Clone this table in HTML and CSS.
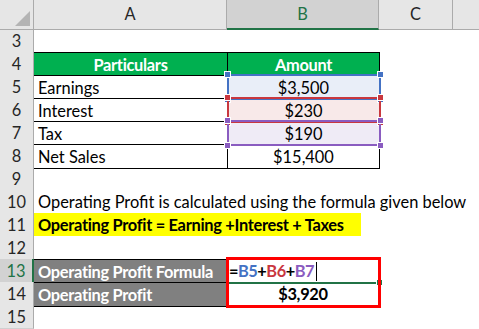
FILE: index.html
```html
<!DOCTYPE html>
<html>
<head>
<meta charset="utf-8">
<link rel="stylesheet" href="styles.css">
</head>
<body>
<div class="sheet">
  <div class="row hdr">
    <div class="corner"><span class="tri"></span></div>
    <div class="ch">A</div>
    <div class="ch sel-col">B</div>
    <div class="ch">C</div>
    <div class="ch last"></div>
  </div>
  <div class="row">
    <div class="rh">3</div><div class="c a"></div><div class="c b"></div><div class="c cc"></div><div class="c d"></div>
  </div>
  <div class="row">
    <div class="rh">4</div>
    <div class="c a tb th">Particulars</div>
    <div class="c b tb th bl">Amount</div>
    <div class="c cc bl"></div><div class="c d"></div>
  </div>
  <div class="row">
    <div class="rh">5</div>
    <div class="c a tb">Earnings</div>
    <div class="c b tb bl num fill-blue">$3,500<div class="sel blue"><i class="h tl"></i><i class="h tr"></i><i class="h bl2"></i><i class="h br"></i></div></div>
    <div class="c cc bl"></div><div class="c d"></div>
  </div>
  <div class="row">
    <div class="rh">6</div>
    <div class="c a tb">Interest</div>
    <div class="c b tb bl num fill-red">$230<div class="sel red"><i class="h tl"></i><i class="h tr"></i><i class="h bl2"></i><i class="h br"></i></div></div>
    <div class="c cc bl"></div><div class="c d"></div>
  </div>
  <div class="row">
    <div class="rh">7</div>
    <div class="c a tb">Tax</div>
    <div class="c b tb bl num fill-purple">$190<div class="sel purple"><i class="h tl"></i><i class="h tr"></i><i class="h bl2"></i><i class="h br"></i></div></div>
    <div class="c cc bl"></div><div class="c d"></div>
  </div>
  <div class="row">
    <div class="rh">8</div>
    <div class="c a tb bb">Net Sales</div>
    <div class="c b tb bb bl num">$15,400</div>
    <div class="c cc bl"></div><div class="c d"></div>
  </div>
  <div class="row">
    <div class="rh">9</div><div class="c a"></div><div class="c b"></div><div class="c cc"></div><div class="c d"></div>
  </div>
  <div class="row">
    <div class="rh">10</div>
    <div class="c a over">Operating Profit is calculated using the formula given below</div>
    <div class="c b"></div><div class="c cc"></div><div class="c d"></div>
  </div>
  <div class="row">
    <div class="rh">11</div>
    <div class="c a over"><span class="hl">Operating Profit = Earning +Interest + Taxes</span></div>
    <div class="c b"></div><div class="c cc"></div><div class="c d"></div>
  </div>
  <div class="row">
    <div class="rh">12</div><div class="c a"></div><div class="c b"></div><div class="c cc"></div><div class="c d"></div>
  </div>
  <div class="row">
    <div class="rh active">13</div>
    <div class="c a grey tb">Operating Profit Formula</div>
    <div class="c b formula"><span class="fx">=</span><span class="r1">B5</span><span class="fx">+</span><span class="r2">B6</span><span class="fx">+</span><span class="r3">B7</span><span class="caret"></span>
      <div class="editline"></div><div class="fillh"></div><div class="redbox"></div>
    </div>
    <div class="c cc"></div><div class="c d"></div>
  </div>
  <div class="row">
    <div class="rh">14</div>
    <div class="c a grey tb bb">Operating Profit</div>
    <div class="c b num bold">$3,920</div>
    <div class="c cc"></div><div class="c d"></div>
  </div>
  <div class="row">
    <div class="rh">15</div><div class="c a"></div><div class="c b"></div><div class="c cc"></div><div class="c d"></div>
  </div>
</div>
</body>
</html>
```
FILE: styles.css
```css
* { box-sizing: border-box; }
html, body { margin: 0; padding: 0; background: #fff; }
body {
  font-family: Lato, "Liberation Sans", sans-serif;
  font-size: 16.4px;
  color: #000;
  width: 479px;
  height: 329px;
  overflow: hidden;
}
.sheet { display: flex; flex-direction: column; }
.row {
  display: grid;
  grid-template-columns: 34px 193px 152px 74px 26px;
  height: 23px;
  line-height: 23px;
}
.row.hdr { height: 29px; line-height: 28px; }
.corner {
  background: #e6e6e6;
  border-right: 1px solid #ababab;
  border-bottom: 1px solid #ababab;
  position: relative;
}
.tri {
  position: absolute;
  left: 15px; top: 11px;
  width: 0; height: 0;
  border-left: 15px solid transparent;
  border-bottom: 15px solid #b4b4b4;
}
.ch {
  background: #e6e6e6;
  border-right: 1px solid #ababab;
  border-bottom: 1px solid #ababab;
  text-align: center;
  color: #262626;
  font-size: 16.4px;
}
.ch.sel-col {
  background: #d2d2d2;
  color: #217346;
  border-bottom: 2px solid #217346;
}
.ch.last { border-right: none; }
.rh {
  background: #e6e6e6;
  border-right: 1px solid #ababab;
  border-bottom: 1px solid #d0d0d0;
  text-align: center;
  color: #262626;
  font-size: 16.4px;
}
.rh.active {
  background: #d2d2d2;
  color: #217346;
  border-right: 2px solid #217346;
}
.c { position: relative; white-space: nowrap; padding-left: 4px; }
.over { overflow: visible; z-index: 2; }
.tb { border-top: 1px solid #000; }
.bb { border-bottom: 1px solid #000; }
.bl { border-left: 1px solid #000; }
.th {
  background: #00b050;
  color: #fff;
  font-weight: 700;
  letter-spacing: -0.3px;
  text-align: center;
  padding-left: 0;
}
.num { text-align: center; padding-left: 0; }
.bold { font-weight: 700; letter-spacing: -0.3px; }
.fill-blue { background: #e9eef8; }
.fill-red { background: #f8e9e9; }
.fill-purple { background: #efebf6; }
.sel {
  position: absolute;
  left: -1px; top: -2px; right: -2px; bottom: -1px;
  border: 2px solid;
  z-index: 3;
}
.sel.blue { border-color: #4472c4; }
.sel.red { border-color: #c9373f; z-index: 4; }
.sel.purple { border-color: #8a5cc0; z-index: 5; }
.h {
  position: absolute;
  width: 7px; height: 7px;
  border: 1px solid #fff;
}
.blue .h { background: #4472c4; }
.red .h { background: #c9373f; }
.purple .h { background: #8a5cc0; }
.h.tl { left: -5px; top: -5px; }
.h.tr { right: -5px; top: -5px; }
.h.bl2 { left: -5px; bottom: -5px; }
.h.br { right: -5px; bottom: -5px; }
.hl {
  display: inline-block;
  background: #ffff00;
  font-weight: 700;
  letter-spacing: -0.3px;
  width: 327px;
  margin-left: -4px;
  padding-left: 4px;
}
.grey {
  background: #808080;
  color: #fff;
  font-weight: 700;
  letter-spacing: -0.3px;
}
.formula { font-weight: 700; letter-spacing: -0.5px; padding-left: 2px; }
.fx { color: #000; }
.r1 { color: #4472c4; }
.r2 { color: #c9373f; }
.r3 { color: #8a5cc0; }
.caret {
  display: inline-block;
  width: 1px;
  height: 19px;
  background: #000;
  vertical-align: -4px;
  margin-left: 2px;
}
.editline {
  position: absolute;
  left: 1px; top: 23px;
  width: 148px; height: 2px;
  background: #217346;
}
.fillh {
  position: absolute;
  left: 150px; top: 21px;
  width: 5px; height: 5px;
  background: #217346;
}
.redbox {
  position: absolute;
  left: -1px; top: -2px;
  width: 155px; height: 51px;
  border: 3px solid #ff0000;
  z-index: 3;
}
```
